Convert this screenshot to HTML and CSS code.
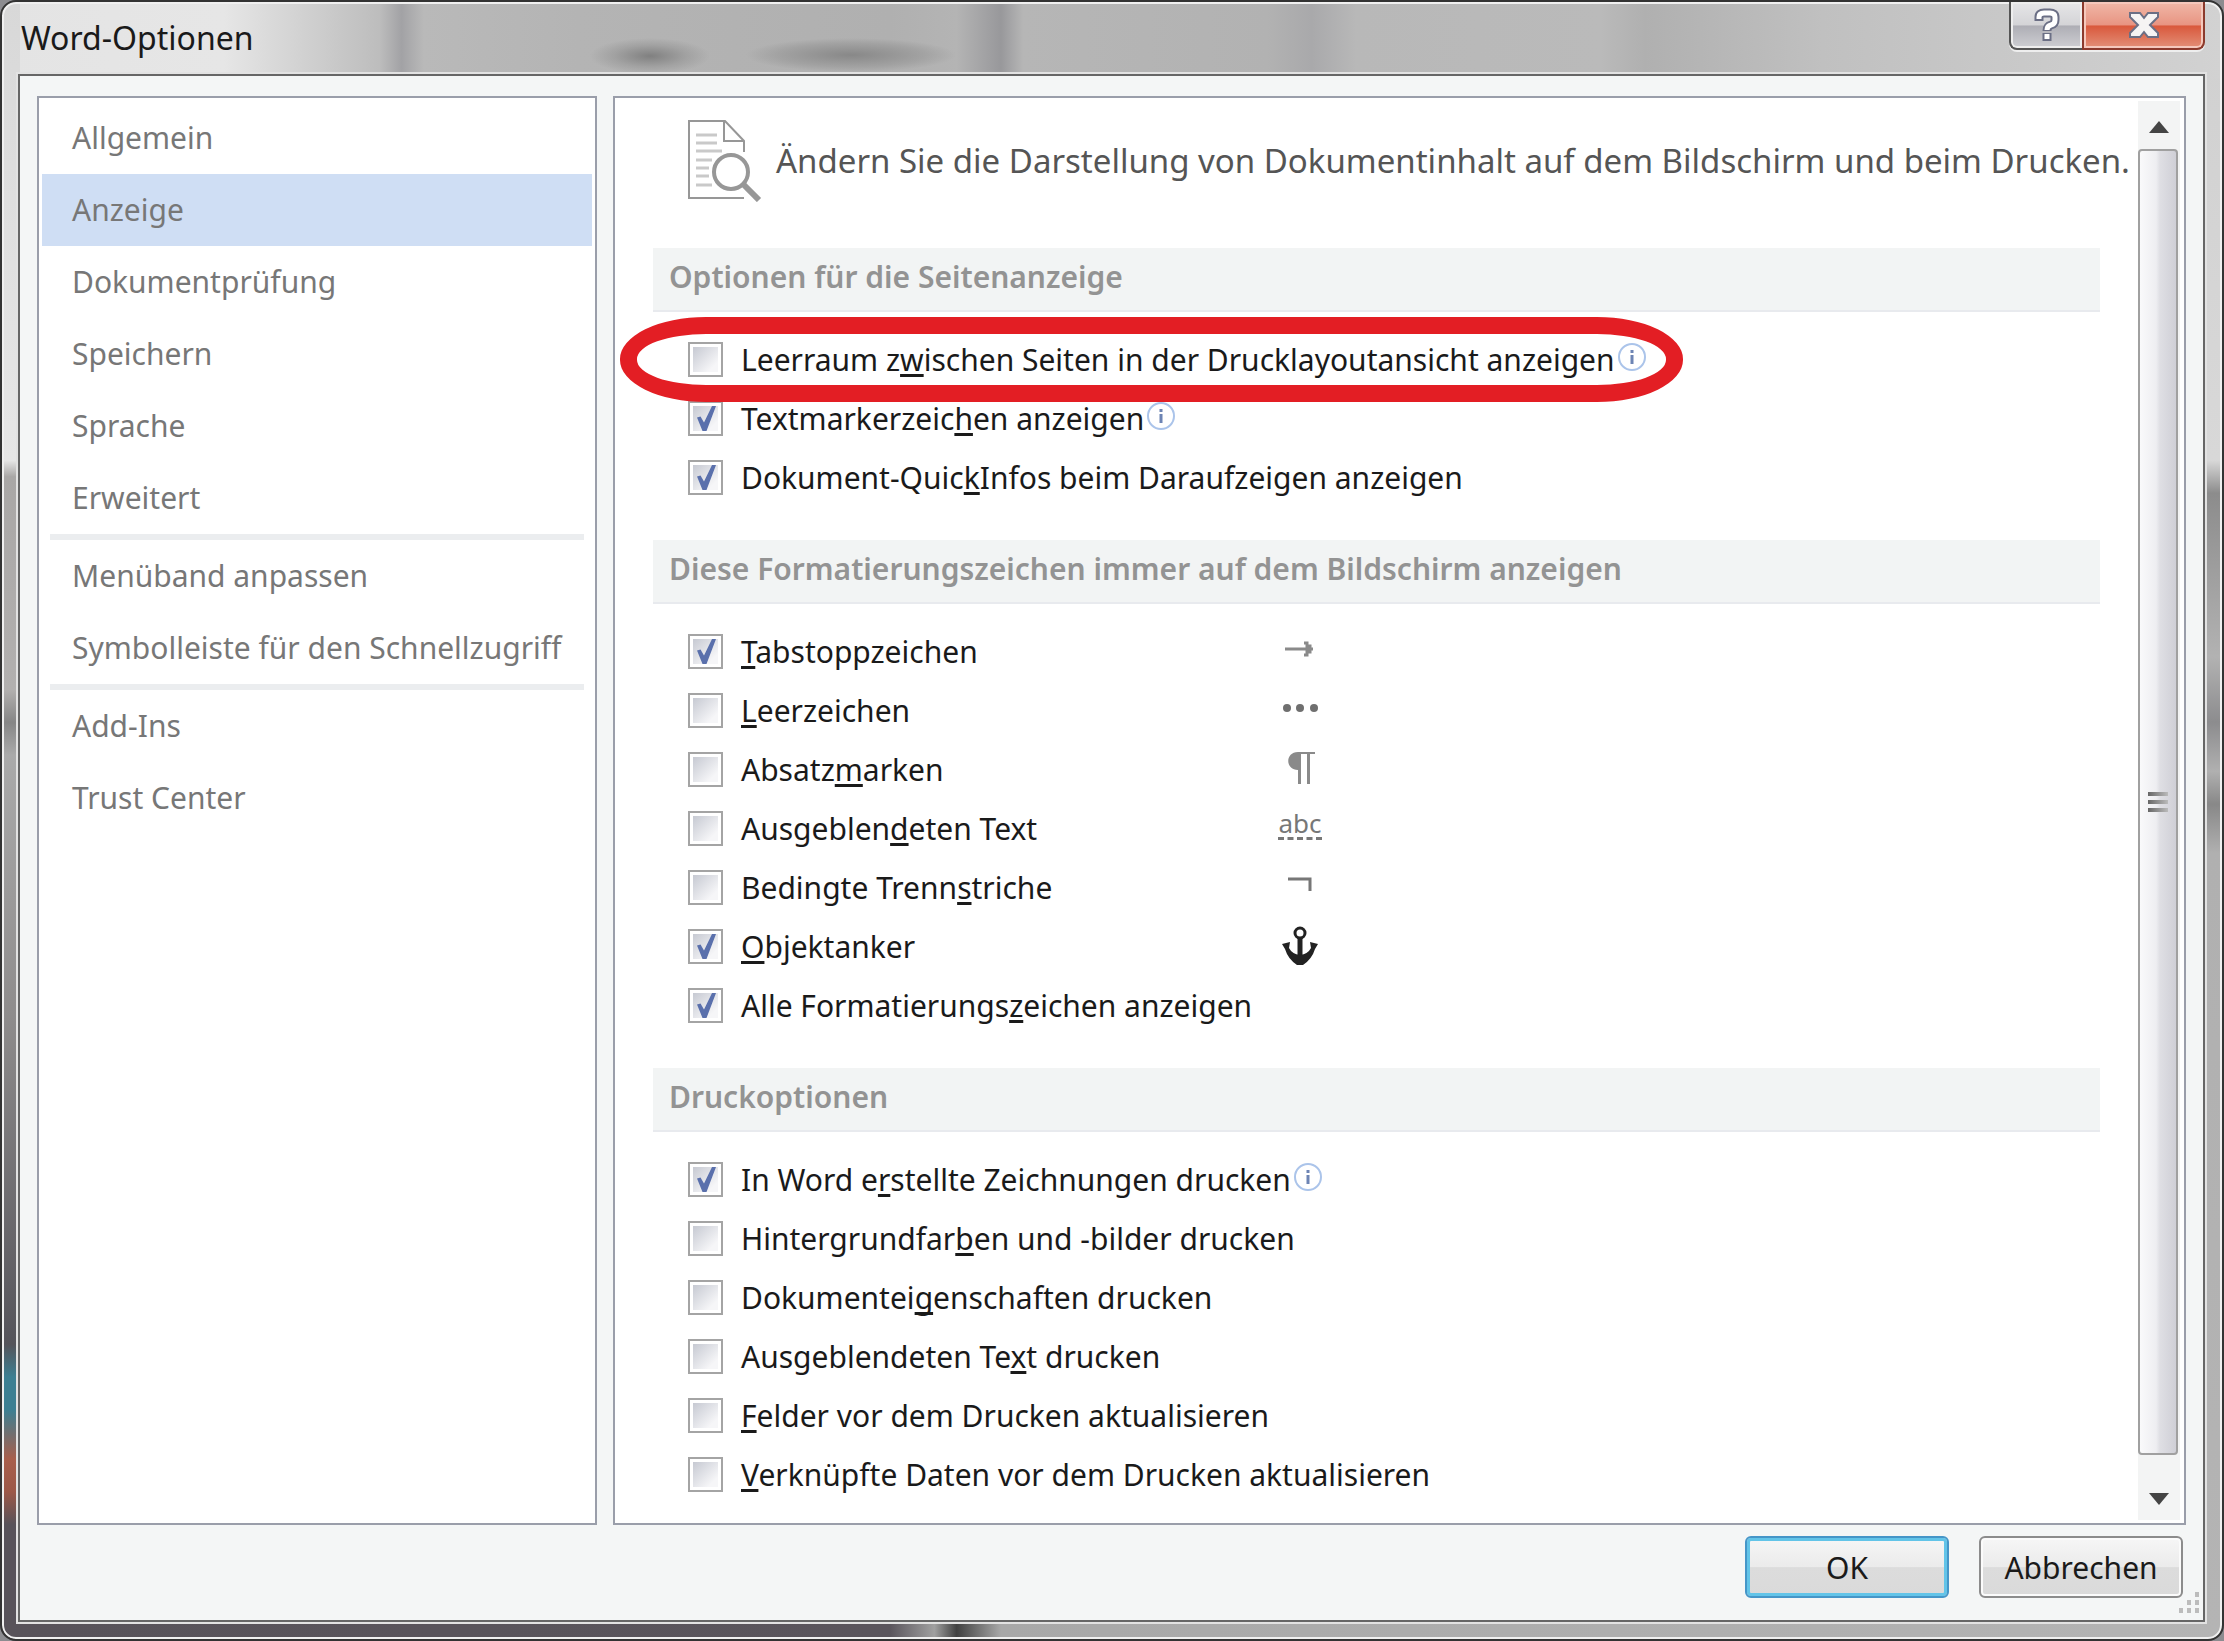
FILE: index.html
```
<!DOCTYPE html>
<html lang="de">
<head>
  <meta charset="utf-8">
  <title>Word-Optionen</title>
  <link rel="stylesheet" href="styles.css">
</head>
<body>
  <div class="dialog">
    <header class="titlebar">
      <h1>Word-Optionen</h1>
      <div class="window-buttons">
        <button class="help" aria-label="Hilfe">
          <svg width="28" height="36" viewBox="0 0 28 36"><path d="M6 14 V10 Q6 6 11 6 H17 Q22 6 22 10 V13 Q22 17 18 18 Q14 19 14 24 M14 26 V34" fill="none" stroke="#6b6f85" stroke-width="9"/><path d="M6 12 V10 Q6 6 11 6 H17 Q22 6 22 10 V13 Q22 17 18 18 Q14 19 14 23 M14 27 V32" fill="none" stroke="#fff" stroke-width="5"/></svg>
        </button>
        <button class="close" aria-label="Schließen">
          <svg width="32" height="28" viewBox="0 0 32 28"><path d="M2 2 H12 L16 7 L20 2 H30 V6 L22 14 L30 22 V26 H20 L16 21 L12 26 H2 V22 L10 14 L2 6 Z" fill="#f6f4f4" stroke="#6b6f85" stroke-width="2"/></svg>
        </button>
      </div>
    </header>

    <div class="client">
      <div class="panels">
        <nav class="sidebar">
          <a href="#">Allgemein</a>
          <a href="#" class="active">Anzeige</a>
          <a href="#">Dokumentprüfung</a>
          <a href="#">Speichern</a>
          <a href="#">Sprache</a>
          <a href="#">Erweitert</a>
          <hr>
          <a href="#">Menüband anpassen</a>
          <a href="#">Symbolleiste für den Schnellzugriff</a>
          <hr>
          <a href="#">Add-Ins</a>
          <a href="#">Trust Center</a>
        </nav>

        <main class="content">
          <div class="options">
            <div class="intro">
              <svg width="74" height="82" viewBox="0 0 74 82" fill="none">
                <path d="M56 32 V21 L37 1 H1 V78 H56" stroke="#979797" stroke-width="2"/>
                <path d="M36 1 V21 H56" stroke="#979797" stroke-width="2"/>
                <path d="M8 15 H29 M8 23 H29 M8 31 H34 M8 40 H24 M8 48 H21 M8 56 H21 M8 65 H24" stroke="#c9c9c9" stroke-width="3"/>
                <circle cx="43" cy="52" r="17" fill="#fff" stroke="#979797" stroke-width="4"/>
                <path d="M55 64 L71 80" stroke="#979797" stroke-width="6"/>
              </svg>
              <p>Ändern Sie die Darstellung von Dokumentinhalt auf dem Bildschirm und beim Drucken.</p>
            </div>

            <section>
              <h2>Optionen für die Seitenanzeige</h2>
              <ul>
                <li>
                  <label class="marked"><input type="checkbox"><span>Leerraum z<u>w</u>ischen Seiten in der Drucklayoutansicht anzeigen</span>
                    <svg class="info" viewBox="0 0 30 30"><circle cx="15" cy="15" r="13"/><path d="M15 8 V11 M15 13 V22"/></svg></label>
                </li>
                <li>
                  <label><input type="checkbox" checked><span>Textmarkerzeic<u>h</u>en anzeigen</span>
                    <svg class="info" viewBox="0 0 30 30"><circle cx="15" cy="15" r="13"/><path d="M15 8 V11 M15 13 V22"/></svg></label>
                </li>
                <li>
                  <label><input type="checkbox" checked><span>Dokument-Quic<u>k</u>Infos beim Daraufzeigen anzeigen</span></label>
                </li>
              </ul>
            </section>

            <section>
              <h2>Diese Formatierungszeichen immer auf dem Bildschirm anzeigen</h2>
              <ul class="with-symbols">
                <li>
                  <label><input type="checkbox" checked><span><u>T</u>abstoppzeichen</span></label>
                  <svg class="symbol" viewBox="0 0 48 48"><path d="M9 21 H37 M28 15 H31 V18 H34 V24 H31 V27 H28" fill="none" stroke="#8a8a8a" stroke-width="3"/></svg>
                </li>
                <li>
                  <label><input type="checkbox"><span><u>L</u>eerzeichen</span></label>
                  <svg class="symbol" viewBox="0 0 48 48" fill="#6f6f6f"><circle cx="11" cy="21" r="4"/><circle cx="24" cy="21" r="4"/><circle cx="38" cy="21" r="4"/></svg>
                </li>
                <li>
                  <label><input type="checkbox"><span>Absatz<u>m</u>arken</span></label>
                  <svg class="symbol" viewBox="0 0 48 48"><path d="M39 6 H22 C9 6 9 24 22 24 V38 H25 V8 H31 V38 H34 V8 H39 Z" fill="#8a8a8a"/></svg>
                </li>
                <li>
                  <label><input type="checkbox"><span>Ausgeblen<u>d</u>eten Text</span></label>
                  <span class="symbol hidden-text"><span>abc</span></span>
                </li>
                <li>
                  <label><input type="checkbox"><span>Bedingte Trenn<u>s</u>triche</span></label>
                  <svg class="symbol" viewBox="0 0 48 48"><path d="M12 15 H34 V27" fill="none" stroke="#777" stroke-width="3"/></svg>
                </li>
                <li>
                  <label><input type="checkbox" checked><span><u>O</u>bjektanker</span></label>
                  <svg class="symbol" viewBox="0 0 48 48"><circle cx="24" cy="10" r="5" fill="none" stroke="#222" stroke-width="3"/><path d="M24 15 V36" stroke="#222" stroke-width="5"/><path d="M6 21 L14 19 L13 25 Q16 31 24 32 Q32 31 35 25 L34 19 L42 21 L39 26 Q36 36 27 42 H21 Q12 36 9 26 Z" fill="#222"/></svg>
                </li>
                <li>
                  <label><input type="checkbox" checked><span>Alle Formatierungs<u>z</u>eichen anzeigen</span></label>
                </li>
              </ul>
            </section>

            <section>
              <h2>Druckoptionen</h2>
              <ul>
                <li>
                  <label><input type="checkbox" checked><span>In Word e<u>r</u>stellte Zeichnungen drucken</span>
                    <svg class="info" viewBox="0 0 30 30"><circle cx="15" cy="15" r="13"/><path d="M15 8 V11 M15 13 V22"/></svg></label>
                </li>
                <li><label><input type="checkbox"><span>Hintergrundfar<u>b</u>en und -bilder drucken</span></label></li>
                <li><label><input type="checkbox"><span>Dokumentei<u>g</u>enschaften drucken</span></label></li>
                <li><label><input type="checkbox"><span>Ausgeblendeten Te<u>x</u>t drucken</span></label></li>
                <li><label><input type="checkbox"><span><u>F</u>elder vor dem Drucken aktualisieren</span></label></li>
                <li><label><input type="checkbox"><span><u>V</u>erknüpfte Daten vor dem Drucken aktualisieren</span></label></li>
              </ul>
            </section>
          </div>

          <div class="scrollbar">
            <button class="up" aria-label="Nach oben"><svg width="20" height="12" viewBox="0 0 20 12"><path d="M0 12 L10 0 L20 12 Z" fill="#444"/></svg></button>
            <div class="thumb"><i></i><i></i><i></i></div>
            <button class="down" aria-label="Nach unten"><svg width="20" height="12" viewBox="0 0 20 12"><path d="M0 0 L10 12 L20 0 Z" fill="#444"/></svg></button>
          </div>
        </main>
      </div>

      <footer>
        <button class="default">OK</button>
        <button>Abbrechen</button>
        <svg class="grip" width="20" height="22" viewBox="0 0 20 22" fill="#bcbcbc"><path d="M16 0h4v5h-4z M8 8h4v5h-4z M16 8h4v5h-4z M0 16h4v5h-4z M8 16h4v5h-4z M16 16h4v5h-4z"/></svg>
      </footer>
    </div>
  </div>
</body>
</html>
```

FILE: styles.css
```
* {
  box-sizing: border-box;
}

body {
  margin: 0;
  background-color: #8c8c90;
  font-family: "Noto Sans", "Open Sans", sans-serif;
  font-size: 30px;
  color: #1a1a1a;
}

button {
  font: inherit;
  color: inherit;
  padding: 0;
}

/* Window frame */
.dialog {
  display: flex;
  flex-direction: column;
  min-height: 100vh;
  padding: 0 17px 17px 16px;
  border: 2px solid #333;
  border-radius: 16px;
  box-shadow: inset 0 0 0 2px #f0f0f0;
  background:
    linear-gradient(to right, #58535a 0%, #5a555c 40%, #a0a0a0 42%, #404040 43%, #a8a8a8 45%, #b4b4b4 100%) bottom / 100% 18px no-repeat,
    linear-gradient(to bottom, #d8d8d8 0%, #e6e6e6 28%, #a9a7a6 29%, #b2b0af 42%, #868686 44%, #aaa 46%, #8e8c8c 62%, #55545a 82%, #3d7f92 84%, #3d7f92 86%, #a85f4c 89%, #9c5848 91%, #58535a 93%, #58535a 100%) left / 18px 100% no-repeat,
    radial-gradient(closest-side, #808080, #90909080 60%, transparent) 28% 36px / 120px 36px no-repeat,
    radial-gradient(closest-side, #888, #94949480 70%, transparent) 37% 36px / 210px 34px no-repeat,
    linear-gradient(to right, #e4e4e4 0%, #e6e6e6 10%, #bdbdbd 17%, #a2a2a5 18%, #b9b9b9 19%, #b4b4b4 26%, #b0b0b0 40%, #b4b4b4 43%, #98989b 45%, #b6b6b6 46%, #b2b2b2 57%, #a9a9ab 59%, #b8b8b8 61%, #bababa 72%, #b0b0b0 74%, #c0c0c0 82%, #d2d2d2 100%) top / 100% 76px no-repeat,
    linear-gradient(to bottom, #d0d0d0 0%, #d8d8d8 28%, #8c8c8c 30%, #b2b2b2 40%, #8c8c8e 44%, #b0b0b0 47%, #888 49%, #b0b0b0 52%, #b4b4b4 100%);
}

.titlebar {
  display: flex;
  justify-content: space-between;
  align-items: flex-start;
  height: 72px;
}

.titlebar h1 {
  margin: 0 0 0 3px;
  font-size: 32px;
  font-weight: 400;
  line-height: 72px;
}

.window-buttons {
  display: flex;
}

.window-buttons button {
  display: flex;
  justify-content: center;
  align-items: center;
  height: 48px;
  border: 2px solid #555;
  border-top: 0;
}

.window-buttons .help {
  width: 73px;
  border-radius: 0 0 0 8px;
  border-right: 0;
  background: linear-gradient(#e6e6e8, #d4d4d7 50%, #aeaeb5 52%, #cecfd3);
  box-shadow: inset 0 0 0 2px #eee, 0 2px 0 #eee;
}

.window-buttons .close {
  width: 123px;
  border-color: #8c3a2c;
  border-radius: 0 0 8px 0;
  background: linear-gradient(#f0b8a8, #e89482 50%, #d9583c 52%, #e39078);
  box-shadow: inset 0 0 0 2px #f5c8bc, 0 2px 0 #eee;
}

/* Client area */
.client {
  display: flex;
  flex-direction: column;
  flex: 1;
  padding: 20px 17px 22px 17px;
  border: 2px solid #666;
  box-shadow: 0 0 0 2px #e2e2e2;
  background-color: #f4f6f6;
}

.panels {
  display: flex;
  flex: 1;
  gap: 16px;
}

.sidebar,
.content {
  border: 2px solid #9a9eaa;
  background-color: #fff;
}

.sidebar {
  flex: 0 0 560px;
  padding: 4px 3px;
}

.sidebar a {
  display: block;
  height: 72px;
  padding-left: 30px;
  line-height: 72px;
  color: #777;
  text-decoration: none;
  white-space: nowrap;
}

.sidebar .active {
  background-color: #cfdef4;
}

.sidebar hr {
  height: 6px;
  margin: 0 8px;
  border: 0;
  background-color: #ebedef;
}

.content {
  display: flex;
  flex: 1;
}

.options {
  flex: 1;
  padding: 22px 38px 0 38px;
}

.intro {
  display: flex;
  align-items: flex-start;
  gap: 14px;
  height: 128px;
  padding-left: 35px;
}

.intro svg {
  flex: none;
}

.intro p {
  flex: 1 0 0;
  width: 0;
  margin: 0;
  font-size: 33px;
  line-height: 82px;
  color: #555;
  white-space: nowrap;
}

section + section {
  margin-top: 33px;
}

h2 {
  height: 64px;
  margin: 0 0 18px;
  padding-left: 16px;
  border-bottom: 2px solid #e8eaee;
  background-color: #f2f4f4;
  font-size: 30px;
  font-weight: 600;
  line-height: 58px;
  color: #939393;
}

ul {
  margin: 0;
  padding: 0 0 0 35px;
  list-style: none;
}

li {
  display: flex;
  align-items: center;
  height: 59px;
}

label {
  display: flex;
  align-items: center;
  white-space: nowrap;
}

u {
  text-decoration-thickness: 3px;
  text-underline-offset: 3px;
  text-decoration-skip-ink: none;
}

input[type="checkbox"] {
  appearance: none;
  flex: none;
  width: 35px;
  height: 35px;
  margin: 0 18px 0 0;
  padding: 3px;
  border: 2px solid #a4a4a4;
  background: linear-gradient(135deg, #c6c9d2, #f6f6f8 80%) content-box #f6f6f6;
}

input[type="checkbox"]::after {
  content: "";
  display: block;
  width: 100%;
  height: 100%;
}

input[type="checkbox"]:checked::after {
  background-color: #5a70ac;
  clip-path: polygon(16% 46%, 30% 42%, 44% 66%, 76% 0, 92% 0, 54% 100%, 38% 100%);
}

.info {
  width: 30px;
  height: 30px;
  margin: -6px 0 0 2px;
  fill: none;
  stroke: #6d84b4;
  stroke-width: 3;
}

.info circle {
  stroke: #abc4ea;
  stroke-width: 2;
}

.with-symbols label {
  flex: 0 0 588px;
}

.symbol {
  width: 48px;
  height: 48px;
}

.hidden-text {
  font-size: 26px;
  line-height: 36px;
  text-align: center;
  color: #777;
}

.hidden-text span {
  display: inline-block;
  height: 35px;
  border-bottom: 3px dashed #777;
}

/* Red outline round the highlighted option */
.marked {
  position: relative;
}

.marked::after {
  content: "";
  position: absolute;
  top: -22px;
  bottom: -22px;
  left: -68px;
  right: -36px;
  border: 17px solid #e31e24;
  border-radius: 86px / 42px;
  pointer-events: none;
}

.scrollbar {
  display: flex;
  flex-direction: column;
  width: 42px;
  margin: 3px 4px 3px 0;
  background-color: #f3f4f4;
}

.scrollbar button {
  border: 0;
  background: none;
}

.scrollbar .up {
  height: 48px;
  padding-bottom: 10px;
}

.scrollbar .down {
  height: 65px;
  padding-top: 12px;
}

.thumb {
  display: flex;
  flex: 1;
  flex-direction: column;
  justify-content: center;
  align-items: center;
  gap: 4px;
  width: 40px;
  border: 2px solid #a0a0a0;
  border-radius: 4px;
  background: linear-gradient(to right, #fafafb, #eeeef1 45%, #dfdfe4 55%, #cfcfd6);
}

.thumb i {
  width: 20px;
  height: 4px;
  background: linear-gradient(to right, #666, #bbb);
}

/* Dialog buttons */
footer {
  position: relative;
  display: flex;
  justify-content: flex-end;
  gap: 30px;
  margin-top: 11px;
  padding-right: 3px;
}

footer button {
  width: 204px;
  height: 62px;
  border: 2px solid #8c8c8c;
  border-radius: 6px;
  background: linear-gradient(#f6f6f6, #ebebeb 50%, #dcdcdc 51%, #dadada);
  box-shadow: inset 0 0 0 2px #fbfbfb;
}

footer .default {
  border-color: #4596c8;
  box-shadow: inset 0 0 0 3px #62c4e8;
}

.grip {
  position: absolute;
  right: -13px;
  bottom: -16px;
}
```
